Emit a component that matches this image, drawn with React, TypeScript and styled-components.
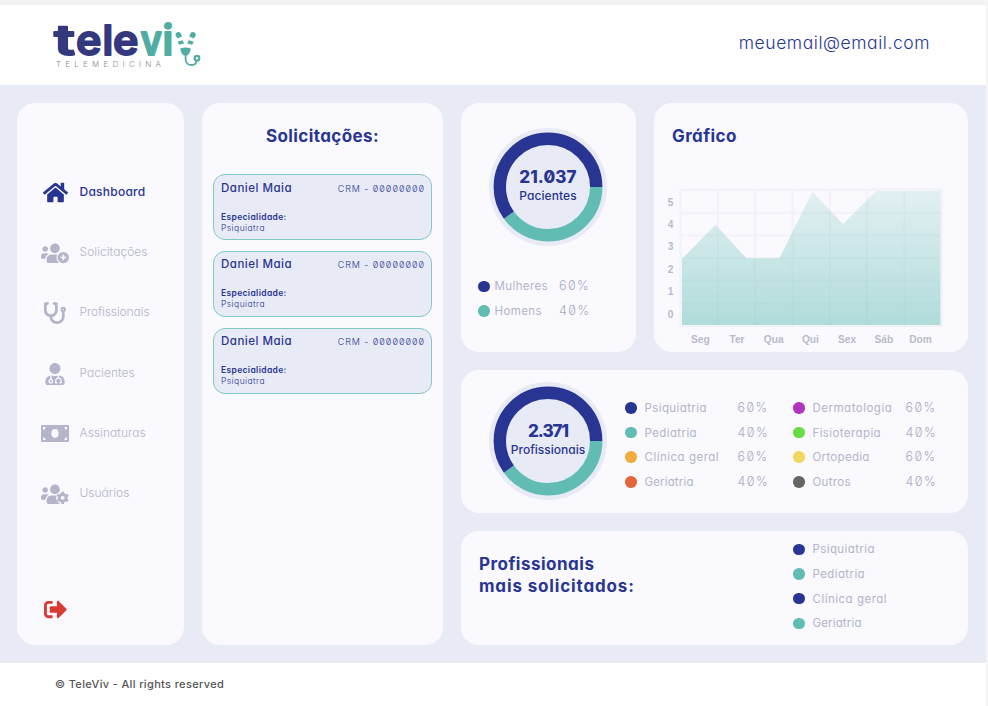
import React from 'react';
import styled, { createGlobalStyle } from 'styled-components';
import { FaHome, FaStethoscope, FaUserMd, FaSignOutAlt } from 'react-icons/fa';

const NAVY = '#283593';
const TEAL = '#61bcb3';
const MUTED = '#b4b5ca';
const CARD = '#f9f9fe';

const GlobalStyle = createGlobalStyle`
  *, *::before, *::after { box-sizing: border-box; }
  html, body { margin: 0; height: 100%; background: #f4f4f4; overflow: hidden; }
  body {
    font-family: Inter, 'Liberation Sans', sans-serif;
    font-feature-settings: 'cv11' 1, 'zero' 1;
    color: ${NAVY};
  }
  h2, p, ul { margin: 0; padding: 0; }
  ul { list-style: none; }
`;

const Page = styled.div`
  width: 986px;
  height: 706px;
  padding-top: 5px;
  display: grid;
  grid-template-rows: 80px 578px 1fr;
`;

const Header = styled.header`
  background: #fff;
  display: flex;
  justify-content: space-between;
  padding: 0 56px 0 50px;
`;

const Email = styled.span`
  margin-top: 27px;
  font-size: 17.5px;
  line-height: 22px;
  font-weight: 300;
  letter-spacing: 0.55px;
`;

const Main = styled.main`
  background: #e8ebf5;
  padding: 18px 18px 18px 17px;
  display: grid;
  grid-template-columns: 167px 241px 507px;
  gap: 18px;
`;

const Card = styled.section`
  background: ${CARD};
  border-radius: 18px;
`;

const Sidebar = styled(Card)`
  display: flex;
  flex-direction: column;
  justify-content: space-between;
  padding: 58px 0 24px 23px;
`;

const NavItem = styled.li<{ $active?: boolean }>`
  height: 60.3px;
  display: flex;
  align-items: center;
  color: ${(p) => (p.$active ? NAVY : MUTED)};
  font-size: 12px;
  font-weight: ${(p) => (p.$active ? 500 : 300)};
`;

const NavIcon = styled.span`
  width: 30px;
  margin-right: 9.5px;
  display: flex;
  justify-content: center;
  padding-top: 3px;
`;

const Track = styled.span<{ $ls?: number }>`
  letter-spacing: ${(p) => p.$ls ?? 0}px;
`;

const Logout = styled.span`
  color: #d93a32;
  padding-left: 3.5px;
  display: flex;
`;

const Requests = styled(Card)`
  padding: 22px 11px 0;
`;

const Title = styled.h2`
  font-size: 17px;
  line-height: 22px;
  font-weight: 700;
`;

const CenterTitle = styled(Title)`
  text-align: center;
  margin-bottom: 27px;
`;

const Request = styled.article`
  height: 66px;
  margin-bottom: 10.8px;
  border: 1px solid #7fcac4;
  border-radius: 12px;
  background: #e8ebf5;
  padding: 5px 7px 0;
  font-size: 8.5px;
  line-height: 11px;
`;

const RequestTop = styled.div`
  display: flex;
  justify-content: space-between;
  align-items: center;
  height: 16px;
  margin-bottom: 15.5px;
`;

const Name = styled.span`
  font-size: 11.5px;
  font-weight: 500;
  letter-spacing: 0.5px;
`;

const Crm = styled.span`
  font-size: 9px;
  font-weight: 300;
  letter-spacing: 0.95px;
  margin-right: -0.95px;
`;

const Label = styled.p`
  font-weight: 600;
  letter-spacing: 0.35px;
`;

const Value = styled.p`
  font-weight: 300;
  letter-spacing: 0.45px;
`;

const Panels = styled.div`
  display: grid;
  grid-template-rows: 249px 142.5px 114.5px;
  gap: 18px;
`;

const TopPanels = styled.div`
  display: grid;
  grid-template-columns: 175px 314px;
  gap: 18px;
`;

const Patients = styled(Card)`
  padding: 23.5px 0 0 17px;
`;

const DonutBox = styled.div`
  display: grid;
  width: 120px;
  height: 120px;
  margin-left: 10px;
  & > * { grid-area: 1 / 1; }
`;

const DonutText = styled.div`
  align-self: center;
  text-align: center;
  font-size: 12px;
  line-height: 17px;
  font-weight: 500;
  padding-bottom: 2px;
`;

const Figure = styled.div`
  font-size: 17px;
  line-height: 19px;
  font-weight: 800;
`;

const Legend = styled.ul`
  display: grid;
  grid-auto-rows: 24.7px;
`;

const PatientLegend = styled(Legend)`
  margin-top: 27.5px;
`;

const LegendItem = styled.li<{ $name: number; $gap: number }>`
  display: grid;
  grid-template-columns: 12px ${(p) => p.$name}px auto;
  column-gap: ${(p) => p.$gap}px;
  align-items: center;
  justify-content: start;
  font-size: 11.5px;
  line-height: 16px;
  color: ${MUTED};
`;

const Percent = styled.span`
  font-size: 12.5px;
  font-weight: 300;
  letter-spacing: 1.4px;
  color: #a9aac2;
`;

const Dot = styled.span<{ $color: string }>`
  width: 11.5px;
  height: 11.5px;
  border-radius: 50%;
  background: ${(p) => p.$color};
`;

const Professionals = styled(Card)`
  display: grid;
  grid-template-columns: 164px 168px 1fr;
  padding: 11px 0 0 0;
`;

const ProfDonut = styled.div`
  padding-left: 17px;
`;

const ProfLegend = styled(Legend)`
  margin-top: 14.5px;
  align-content: start;
`;

const TopRequested = styled(Card)`
  display: grid;
  grid-template-columns: 314px 1fr;
  padding: 6.5px 0 0 18px;
`;

const TopTitle = styled(Title)`
  margin-top: 15.5px;
`;

const ChartCard = styled(Card)`
  padding: 22px 0 0 12px;
`;

const ChartTitle = styled(Title)`
  padding-left: 6px;
`;

const ChartGrid = styled.div`
  margin-top: 41px;
  display: grid;
  grid-template-columns: 12.5px 264px;
  justify-content: start;
  font-family: 'Liberation Sans', sans-serif;
  font-size: 10.2px;
  font-weight: 700;
  color: #b9bbcb;
`;

const YAxis = styled.div`
  display: grid;
  grid-auto-rows: 22.4px;
  padding-top: 3px;
  align-items: center;
  justify-items: center;
  width: 9px;
`;

const XAxis = styled.div`
  grid-column: 2;
  display: grid;
  grid-template-columns: repeat(7, 36.7px);
  padding-left: 3.5px;
  padding-top: 7px;
  text-align: center;
  line-height: 12px;
`;

const Footer = styled.footer`
  background: #fff;
  padding: 12.5px 0 0 55px;
  font-size: 11px;
  line-height: 16px;
  font-weight: 500;
  color: #555;
`;

function Logo() {
  return (
    <svg width="160" height="75" viewBox="50 5 160 75">
      <g fontFamily="Inter" fontWeight="600" fontSize="41" strokeWidth="1.8" strokeLinejoin="round">
        <g fill="#34397e" stroke="#34397e">
          <text x="54" y="55" textLength="21" lengthAdjust="spacingAndGlyphs">t</text>
          <text x="76" y="55" textLength="25.5" lengthAdjust="spacingAndGlyphs">e</text>
          <text x="102.500" y="55">l</text>
          <text x="113" y="55" textLength="25.5" lengthAdjust="spacingAndGlyphs">e</text>
        </g>
        <g fill="#4fada3" stroke="#4fada3">
          <text x="140.500" y="55" textLength="21.500" lengthAdjust="spacingAndGlyphs">v</text>
          <text x="162.500" y="55">i</text>
        </g>
      </g>
      <text x="56" y="67" fontFamily="Inter" fontSize="8" fontWeight="300" fill="#8b8b8b" textLength="105">TELEMEDICINA</text>
      <g fill="#4fada3">
        <path d="M175.600 35.500q-.5-3 2.400-3.500 2.600-.2 3.300 2.400l.7 2-4.500 2.200zM195.700 35.500q.5-3-2.400-3.500-2.600-.2-3.300 2.400l-.7 2 4.500 2.200z" />
        <path d="M177.800 41.500l5-1.200 1.200 3.200-5 1.200zM193.500 41.500l-5-1.200-1.200 3.200 5 1.200z" />
        <path d="M180.200 48.500q5.300-2 10.600 0-.8 5.500-3.800 7h-3q-3-1.500-3.800-7z" />
      </g>
      <path d="M185.600 54v5.500q.5 5.500 6.200 5.500 4.500-.3 4.700-4" fill="none" stroke="#4fada3" strokeWidth="1.800" />
      <circle cx="197" cy="58.200" r="2.300" fill="none" stroke="#4fada3" strokeWidth="2.200" />
    </svg>
  );
}

function People({ children }: { children: React.ReactNode }) {
  return (
    <svg width="28" height="22.400" viewBox="0 0 640 512" fill="currentColor">
      <path d="M96 224c35.300 0 64-28.700 64-64s-28.700-64-64-64-64 28.700-64 64 28.700 64 64 64zM320 256c61.900 0 112-50.100 112-112S381.900 32 320 32 208 82.100 208 144s50.100 112 112 112zM173 274.600C161.500 263.100 145.600 256 128 256H64c-35.300 0-64 28.700-64 64v32c0 17.700 14.300 32 32 32h65.900c6.300-47.400 34.900-87.300 75.100-109.400zM396 288H243C179.600 288 128 339.600 128 403.200V432c0 26.500 21.500 48 48 48h270z" />
      {children}
    </svg>
  );
}

function UsersPlus() {
  return (
    <People>
      <circle cx="510" cy="356" r="156" fill={CARD} />
      <circle cx="510" cy="356" r="130" />
      <path d="M510 293v126M447 356h126" stroke={CARD} strokeWidth="36" />
    </People>
  );
}

function UsersGear() {
  return (
    <People>
      <circle cx="496" cy="340" r="150" fill={CARD} />
      <circle cx="496" cy="340" r="78" fill="none" stroke="currentColor" strokeWidth="66" />
      {[0, 60, 120].map((a) => (
        <path key={a} d="M466 198h60v50h-60zM466 432h60v50h-60z" transform={`rotate(${a} 496 340)`} />
      ))}
    </People>
  );
}

function Bill() {
  return (
    <svg width="28" height="17" viewBox="0 0 28 17">
      <rect width="28" height="17" rx="1.300" fill="currentColor" />
      <ellipse cx="14" cy="8.500" rx="3.600" ry="4.400" fill={CARD} />
      <path d="M2 2h2.800q-.3 2.500-2.800 2.800zM26 2h-2.800q.3 2.500 2.800 2.800zM2 15h2.800q-.3-2.500-2.800-2.800zM26 15h-2.800q.3-2.500 2.800-2.800z" fill={CARD} />
    </svg>
  );
}

function Donut({ value, label, valueLs, labelLs }: { value: string; label: string; valueLs: number; labelLs: number }) {
  const r = 48.2;
  const c = 2 * Math.PI * r;
  return (
    <DonutBox>
      <svg width="120" height="120" viewBox="0 0 120 120">
        <circle cx="60" cy="60" r="59" fill="#e8ebf5" />
        <circle cx="60" cy="60" r={r} fill="none" stroke={TEAL} strokeWidth="12.400" strokeDasharray={`${c * 0.4} ${c * 0.6}`} />
        <circle cx="60" cy="60" r={r} fill="none" stroke={NAVY} strokeWidth="12.400" strokeDasharray={`${c * 0.6} ${c * 0.4}`} strokeDashoffset={-c * 0.4} />
      </svg>
      <DonutText>
        <Figure><Track $ls={valueLs}>{value}</Track></Figure>
        <Track $ls={labelLs}>{label}</Track>
      </DonutText>
    </DonutBox>
  );
}

type Entry = { color: string; name: string; pct?: string; ls?: number };

function Entries({ items, name, gap }: { items: Entry[]; name: number; gap: number }) {
  return (
    <>
      {items.map((e) => (
        <LegendItem key={e.name} $name={name} $gap={gap}>
          <Dot $color={e.color} />
          <Track $ls={e.ls ?? 0.4}>{e.name}</Track>
          {e.pct && <Percent>{e.pct}</Percent>}
        </LegendItem>
      ))}
    </>
  );
}

const sexes: Entry[] = [
  { color: NAVY, name: 'Mulheres', pct: '60%' },
  { color: TEAL, name: 'Homens', pct: '40%' },
];
const specialtiesA: Entry[] = [
  { color: NAVY, name: 'Psiquiatria', pct: '60%' },
  { color: TEAL, name: 'Pediatria', pct: '40%' },
  { color: '#f2ab3c', name: 'Clínica geral', pct: '60%', ls: 0.5 },
  { color: '#e4653b', name: 'Geriatria', pct: '40%', ls: 0.15 },
];
const specialtiesB: Entry[] = [
  { color: '#b035bd', name: 'Dermatologia', pct: '60%', ls: 0.5 },
  { color: '#69dc43', name: 'Fisioterapia', pct: '40%' },
  { color: '#f1d75f', name: 'Ortopedia', pct: '60%', ls: 0.3 },
  { color: '#666666', name: 'Outros', pct: '40%', ls: 0.3 },
];
const requested: Entry[] = [
  { color: NAVY, name: 'Psiquiatria' },
  { color: TEAL, name: 'Pediatria' },
  { color: NAVY, name: 'Clínica geral', ls: 0.5 },
  { color: TEAL, name: 'Geriatria', ls: 0.15 },
];

const nav = [
  { label: 'Dashboard', icon: <FaHome size={25} />, active: true, ls: 0.25 },
  { label: 'Solicitações', icon: <UsersPlus />, ls: 0.05 },
  { label: 'Profissionais', icon: <FaStethoscope size={22} />, ls: -0.1 },
  { label: 'Pacientes', icon: <FaUserMd size={22} />, ls: 0.05 },
  { label: 'Assinaturas', icon: <Bill />, ls: 0.05 },
  { label: 'Usuários', icon: <UsersGear />, ls: 0 },
];

function Chart() {
  return (
    <svg width="264" height="139" viewBox="678.500 188 264 139">
      <defs>
        <linearGradient id="area" x1="0" y1="0" x2="0" y2="1">
          <stop offset="0" stopColor={TEAL} stopOpacity="0.150" />
          <stop offset="1" stopColor={TEAL} stopOpacity="0.480" />
        </linearGradient>
      </defs>
      <path
        d="M680 188.500V327M717.400 190V326M754.700 190V326M792.100 190V326M829.400 190V326M866.500 190V326M904 190V326M941.200 188.500V327M679 189.700H942M680 212.800H941M680 235.500H941M680 258H941M680 280.700H941M680 303.500H941M679 326H942"
        fill="none" stroke="#f3f2f8" strokeWidth="2.200"
      />
      <path d="M681.500 259L715 224.500L746 258.300H779L812 191.500L842.500 224.300L875.500 191H940V325H681.500Z" fill="url(#area)" />
    </svg>
  );
}

export default function App() {
  return (
    <>
      <GlobalStyle />
      <Page>
        <Header>
          <Logo />
          <Email>meuemail@email.com</Email>
        </Header>
        <Main>
          <Sidebar as="nav">
            <ul>
              {nav.map((n) => (
                <NavItem key={n.label} $active={n.active}>
                  <NavIcon>{n.icon}</NavIcon>
                  <Track $ls={n.ls}>{n.label}</Track>
                </NavItem>
              ))}
            </ul>
            <Logout><FaSignOutAlt size={23} /></Logout>
          </Sidebar>
          <Requests>
            <CenterTitle><Track $ls={0.4}>Solicitações:</Track></CenterTitle>
            {[0, 1, 2].map((i) => (
              <Request key={i}>
                <RequestTop>
                  <Name>Daniel Maia</Name>
                  <Crm>CRM - 00000000</Crm>
                </RequestTop>
                <Label>Especialidade:</Label>
                <Value>Psiquiatra</Value>
              </Request>
            ))}
          </Requests>
          <Panels>
            <TopPanels>
              <Patients>
                <Donut value="21.037" label="Pacientes" valueLs={0.1} labelLs={0.1} />
                <PatientLegend><Entries items={sexes} name={60} gap={4.5} /></PatientLegend>
              </Patients>
              <ChartCard>
                <ChartTitle><Track $ls={0.4}>Gráfico</Track></ChartTitle>
                <ChartGrid>
                  <YAxis>{[5, 4, 3, 2, 1, 0].map((v) => <span key={v}>{v}</span>)}</YAxis>
                  <Chart />
                  <XAxis>{['Seg', 'Ter', 'Qua', 'Qui', 'Sex', 'Sáb', 'Dom'].map((d) => <span key={d}>{d}</span>)}</XAxis>
                </ChartGrid>
              </ChartCard>
            </TopPanels>
            <Professionals>
              <ProfDonut><Donut value="2.371" label="Profissionais" valueLs={-1} labelLs={0} /></ProfDonut>
              <ProfLegend><Entries items={specialtiesA} name={85.500} gap={7.500} /></ProfLegend>
              <ProfLegend><Entries items={specialtiesB} name={85.500} gap={7.500} /></ProfLegend>
            </Professionals>
            <TopRequested>
              <TopTitle>
                <Track $ls={0.5}>Profissionais</Track>
                <br />
                <Track $ls={0.85}>mais solicitados:</Track>
              </TopTitle>
              <Legend><Entries items={requested} name={85.500} gap={7.500} /></Legend>
            </TopRequested>
          </Panels>
        </Main>
        <Footer><Track $ls={0.35}>© TeleViv - All rights reserved</Track></Footer>
      </Page>
    </>
  );
}
